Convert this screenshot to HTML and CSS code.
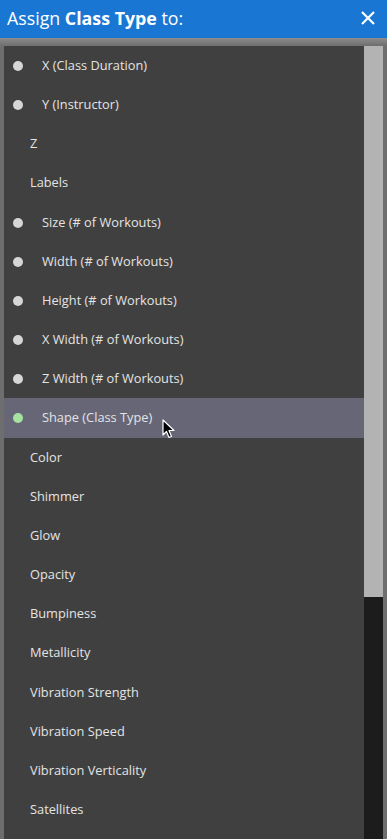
FILE: index.html
```html
<!DOCTYPE html>
<html lang="en">
<head>
    <meta charset="UTF-8">
    <title>Assign Class Type</title>
    <link rel="stylesheet" href="styles.css">
</head>
<body>

    <!-- title bar -->
    <div class="titlebar">
        <div class="title">Assign <b>Class Type</b> to:</div>
        <svg class="close" width="14" height="14" viewBox="0 0 14 14">
            <path d="M1 1 L13 13 M13 1 L1 13" stroke="#fff" stroke-width="2.2" fill="none"/>
        </svg>
    </div>

    <!-- list frame -->
    <div class="frame">
        <div class="panel">
            <ul class="list">
                <li class="item dot">X (Class Duration)</li>
                <li class="item dot">Y (Instructor)</li>
                <li class="item">Z</li>
                <li class="item">Labels</li>
                <li class="item dot">Size (# of Workouts)</li>
                <li class="item dot">Width (# of Workouts)</li>
                <li class="item dot">Height (# of Workouts)</li>
                <li class="item dot">X Width (# of Workouts)</li>
                <li class="item dot">Z Width (# of Workouts)</li>
                <li class="item dot active">Shape (Class Type)
                    <svg class="cursor" width="13" height="20" viewBox="0 0 13 20">
                        <path d="M1 1 L1 16 L4.5 12.5 L7 18.5 L9.5 17.5 L7 11.5 L12 11.5 Z" fill="#000" stroke="#fff" stroke-width="1.2" stroke-linejoin="round"/>
                    </svg>
                </li>
                <li class="item">Color</li>
                <li class="item">Shimmer</li>
                <li class="item">Glow</li>
                <li class="item">Opacity</li>
                <li class="item">Bumpiness</li>
                <li class="item">Metallicity</li>
                <li class="item">Vibration Strength</li>
                <li class="item">Vibration Speed</li>
                <li class="item">Vibration Verticality</li>
                <li class="item">Satellites</li>
            </ul>
            <div class="scrollbar">
                <div class="thumb"></div>
            </div>
        </div>
    </div>

</body>
</html>
```

FILE: styles.css
```css
/* base */
body {
    margin: 0;
    padding: 0;
    width: 387px;
    height: 839px;
    overflow: hidden;
    font-family: 'Open Sans', 'Noto Sans', Arial, sans-serif;
    background-color: #404040;
}

/* title bar */
.titlebar {
    height: 38px;
    background-color: #1976d3;
    color: #ffffff;
    display: flex;
    align-items: center;
    justify-content: space-between;
    padding: 0 12px 0 7px;
    box-sizing: border-box;
}

.title {
    font-size: 17.8px;
    margin-top: -2px;
}

.title b {
    font-weight: 700;
}

.close {
    margin-top: -2px;
}

/* frame around the list */
.frame {
    background: linear-gradient(to bottom, #8c8c8c 0px, #6e6e6e 8px, #6e6e6e 100%);
    padding: 8px 4px 0 4px;
    height: 801px;
    box-sizing: border-box;
}

.panel {
    display: flex;
    height: 100%;
    overflow: hidden;
}

.list {
    list-style: none;
    margin: 0;
    padding: 0;
    flex: 1;
    background-color: #404040;
}

.item {
    position: relative;
    height: 39.16px;
    line-height: 39.16px;
    padding-left: 26px;
    font-size: 12.8px;
    color: #e4e4e4;
    white-space: nowrap;
}

.item.dot {
    padding-left: 38px;
}

.item.dot::before {
    content: "";
    position: absolute;
    left: 9px;
    top: 15px;
    width: 10px;
    height: 10px;
    border-radius: 50%;
    background-color: #d6d6d6;
}

.item.active {
    background-color: #666677;
}

.item.active::before {
    background-color: #a6e2a0;
}

.cursor {
    position: absolute;
    left: 158px;
    top: 21px;
}

/* scrollbar */
.scrollbar {
    width: 19px;
    background-color: #1c1c1c;
}

.thumb {
    height: 551px;
    background-color: #b3b3b3;
}
```
